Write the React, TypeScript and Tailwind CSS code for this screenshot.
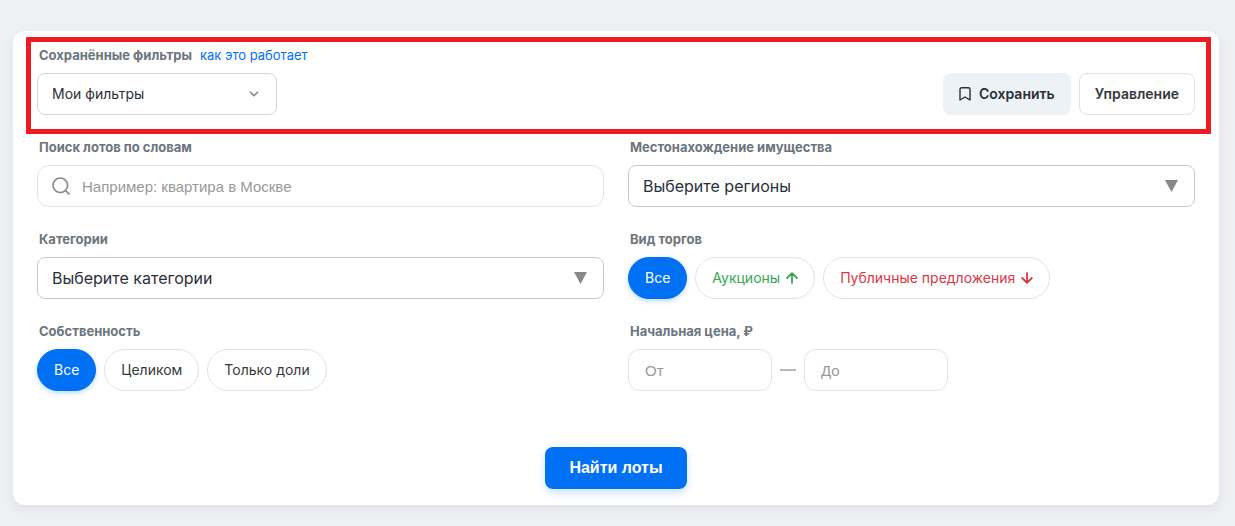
import { useState } from "react";
import type { ReactNode } from "react";
import clsx from "clsx";

const labelClass = "block pl-0.5 text-[13px] leading-5 font-bold text-[#6c757d]";

interface FieldProps {
  label: string;
  htmlFor: string;
  children: ReactNode;
}

function Field({ label, htmlFor, children }: FieldProps) {
  return (
    <div className="flex min-w-0 flex-col gap-2">
      <label htmlFor={htmlFor} className={labelClass}>
        {label}
      </label>
      {children}
    </div>
  );
}

function BigSelect({ id, placeholder }: { id: string; placeholder: string }) {
  return (
    <div className="relative">
      <select
        id={id}
        className="h-[42px] w-full appearance-none rounded-lg border border-[#c8cbce] bg-white pr-10 pl-3.5 text-base text-[#2b2f38]"
      >
        <option>{placeholder}</option>
      </select>
      <svg
        viewBox="0 0 13 12"
        className="pointer-events-none absolute top-[15px] right-[17px] h-3 w-[13px]"
        fill="#888888"
        aria-hidden="true"
      >
        <path d="M0 0h13L6.5 12z" />
      </svg>
    </div>
  );
}

interface PillOption {
  label: string;
  className?: string;
  arrow?: "up" | "down";
}

function Arrow({ dir }: { dir: "up" | "down" }) {
  return (
    <svg
      viewBox="0 0 12 12"
      className="h-3 w-3"
      fill="none"
      stroke="currentColor"
      strokeWidth="1.8"
      strokeLinecap="round"
      strokeLinejoin="round"
      aria-hidden="true"
    >
      <path d={dir === "up" ? "M6 11V1.2M1.2 6L6 1.2 10.8 6" : "M6 1v9.8M1.2 6L6 10.8 10.8 6"} />
    </svg>
  );
}

function PillGroup({ label, options }: { label: string; options: PillOption[] }) {
  const [active, setActive] = useState(0);

  return (
    <div role="group" aria-label={label} className="flex min-w-0 flex-col gap-2">
      <span className={labelClass}>{label}</span>
      <div className="flex flex-wrap gap-2">
        {options.map((option, i) => (
          <button
            key={option.label}
            type="button"
            aria-pressed={i === active}
            onClick={() => setActive(i)}
            className={clsx(
              "flex h-[42px] items-center gap-1.5 rounded-full border px-4 text-sm",
              i === active
                ? "border-[#0070f4] bg-[#0070f4] text-white shadow-[0_2px_5px_rgba(0,112,244,0.25)]"
                : ["border-[#e1e2e8] bg-white", option.className ?? "text-[#343a40]"]
            )}
          >
            {option.label}
            {option.arrow && <Arrow dir={option.arrow} />}
          </button>
        ))}
      </div>
    </div>
  );
}

const tradeTypes: PillOption[] = [
  { label: "Все" },
  { label: "Аукционы", className: "text-[#34a853]", arrow: "up" },
  { label: "Публичные предложения", className: "text-[#dc3545]", arrow: "down" },
];

const ownership: PillOption[] = [{ label: "Все" }, { label: "Целиком" }, { label: "Только доли" }];

const priceInputClass =
  "h-[42px] w-36 rounded-xl border border-[#e1e2e8] bg-white px-4 font-['Liberation_Sans',Arial,sans-serif] text-[15px] text-[#212529] placeholder:text-[#999999]";

export default function App() {
  return (
    <div className="min-h-screen bg-[#f0f1f5] pt-[31px] pr-4 pb-5 pl-[13px] font-['Inter',sans-serif]">
      <form
        onSubmit={(e) => e.preventDefault()}
        className="flex flex-col rounded-xl bg-white pt-1.5 pb-4 shadow-[0_4px_16px_rgba(0,0,0,0.08)]"
      >
        <section className="mr-2 ml-[13px] flex flex-col gap-2 border-5 border-[#ed1c24] pt-[3px] pr-[11px] pb-3.5 pl-1.5">
          <div className="flex items-center gap-2">
            <label htmlFor="saved" className={labelClass}>
              Сохранённые фильтры
            </label>
            <a href="#how" className="text-[13px] leading-5 text-[#0070f4]">
              как это работает
            </a>
          </div>
          <div className="flex items-center gap-2">
            <div className="relative mr-auto w-60">
              <select
                id="saved"
                className="h-[42px] w-full appearance-none rounded-lg border border-[#ced6e0] bg-white pr-10 pl-3.5 text-sm text-[#2b2f38]"
              >
                <option>Мои фильтры</option>
              </select>
              <svg
                viewBox="0 0 10 6"
                className="pointer-events-none absolute top-[18px] right-[18px] h-1.5 w-2.5"
                fill="none"
                stroke="#808080"
                strokeWidth="1.4"
                aria-hidden="true"
              >
                <path d="M1 .8l4 4 4-4" />
              </svg>
            </div>
            <button
              type="button"
              className="flex h-[42px] items-center gap-2 rounded-lg bg-[#ecf2f6] px-4 text-sm font-semibold text-[#2b2f38]"
            >
              <svg
                viewBox="0 0 12 14"
                className="h-3.5 w-3"
                fill="none"
                stroke="currentColor"
                strokeWidth="1.4"
                strokeLinejoin="round"
                aria-hidden="true"
              >
                <path d="M1 13V2.4A1.6 1.6 0 0 1 2.6.8h6.8A1.6 1.6 0 0 1 11 2.4V13L6 10z" />
              </svg>
              Сохранить
            </button>
            <button
              type="button"
              className="h-[42px] rounded-lg border border-[#e1e2e8] bg-white px-[15px] text-sm font-semibold text-[#343a40]"
            >
              Управление
            </button>
          </div>
        </section>

        <div className="mt-[3px] grid grid-cols-2 gap-x-6 gap-y-[22px] px-6">
          <Field label="Поиск лотов по словам" htmlFor="search">
            <div className="relative">
              <svg
                viewBox="0 0 18 18"
                className="pointer-events-none absolute top-3 left-[15px] h-[18px] w-[18px]"
                fill="none"
                stroke="#8a8a8a"
                strokeWidth="1.7"
                aria-hidden="true"
              >
                <circle cx="8.3" cy="8.3" r="7.3" />
                <path d="M13.5 13.5l4 4" />
              </svg>
              <input
                id="search"
                type="text"
                placeholder="Например: квартира в Москве"
                className="h-[42px] w-full rounded-xl border border-[#e1e2e8] bg-white pr-4 pl-11 font-['Liberation_Sans',Arial,sans-serif] text-[15px] text-[#212529] placeholder:text-[#999999]"
              />
            </div>
          </Field>
          <Field label="Местонахождение имущества" htmlFor="regions">
            <BigSelect id="regions" placeholder="Выберите регионы" />
          </Field>
          <Field label="Категории" htmlFor="categories">
            <BigSelect id="categories" placeholder="Выберите категории" />
          </Field>
          <PillGroup label="Вид торгов" options={tradeTypes} />
          <PillGroup label="Собственность" options={ownership} />
          <Field label="Начальная цена, ₽" htmlFor="price-from">
            <div className="flex items-center gap-2">
              <input id="price-from" type="text" placeholder="От" className={priceInputClass} />
              <span className="h-0.5 w-4 bg-[#b8b8b4]" />
              <input type="text" placeholder="До" aria-label="Цена до" className={priceInputClass} />
            </div>
          </Field>
        </div>

        <button
          type="submit"
          className="mt-14 h-[42px] self-center rounded-lg bg-[#0070f4] px-6 font-['Liberation_Sans',Arial,sans-serif] text-base font-bold text-white shadow-[0_4px_8px_rgba(0,112,244,0.2)]"
        >
          Найти лоты
        </button>
      </form>
    </div>
  );
}
